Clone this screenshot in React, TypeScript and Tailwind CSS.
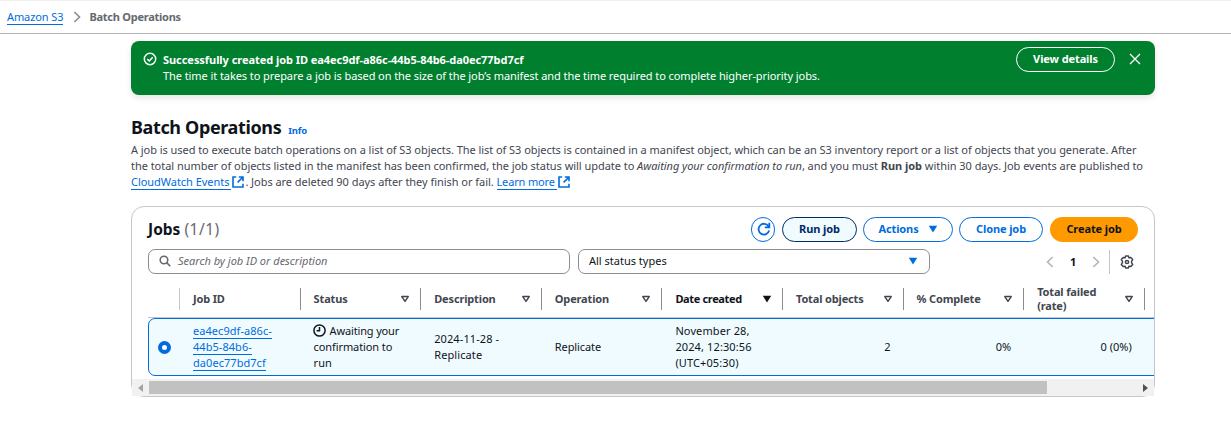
import type { ReactNode } from "react";

function Triangle({ filled = false, className = "" }: { filled?: boolean; className?: string }) {
  return (
    <svg width="10" height="8" viewBox="0 0 10 8" className={`shrink-0 ${className}`}>
      {filled ? (
        <path d="M0.8 0.8h8.4L5 7.4z" fill="currentColor" />
      ) : (
        <path d="M1.8 1.6h6.4L5 6.4z" fill="none" stroke="currentColor" strokeWidth="1.5" strokeLinejoin="round" />
      )}
    </svg>
  );
}

function Chevron({ left = false, className = "" }: { left?: boolean; className?: string }) {
  return (
    <svg width="8" height="12" viewBox="0 0 8 12" className={className} fill="none" stroke="currentColor" strokeWidth="1.6">
      <path d={left ? "M6.7 1L1.5 6l5.2 5" : "M1.3 1l5.2 5-5.2 5"} />
    </svg>
  );
}

function External() {
  return (
    <svg width="12" height="12" viewBox="0 0 12 12" className="mr-px inline-block align-[-2px] text-[#006ce0]" fill="none" stroke="currentColor" strokeWidth="1.6">
      <path d="M4.2 1H1v10h10V7.8M6.8 1H11v4.2M11 1L5.6 6.4" />
    </svg>
  );
}

function Button({ children, className }: { children: ReactNode; className: string }) {
  return (
    <button className={`flex h-[25px] shrink-0 items-center justify-center rounded-full pb-px text-[11px] font-bold tracking-[-0.1px] whitespace-nowrap ${className}`}>
      {children}
    </button>
  );
}

type Column = { title: ReactNode; sort?: "none" | "active" };

const columns: Column[] = [
  { title: "Job ID" },
  { title: "Status", sort: "none" },
  { title: "Description", sort: "none" },
  { title: "Operation", sort: "none" },
  { title: "Date created", sort: "active" },
  { title: "Total objects", sort: "none" },
  { title: "% Complete", sort: "none" },
  { title: <>Total failed<br />(rate)</>, sort: "none" },
];

const link = "mr-px inline-block h-4 border-b border-[#006ce0] pr-[2px] text-[#006ce0]";
const grid = "grid grid-cols-[32px_repeat(8,120.6px)]";

export default function App() {
  return (
    <div className="h-[435px] w-[1231px] overflow-hidden bg-white font-['Noto_Sans',sans-serif] text-[11px] leading-4 text-[#0f141a]">
      <nav className="flex h-[34px] items-center border-t border-b border-t-[#f0f0f2] border-b-[#b4b4bb] pl-[7px]">
        <a className="h-[15px] border-b border-[#006ce0] leading-[14px] tracking-[-0.1px] text-[#006ce0]">Amazon S3</a>
        <Chevron className="ml-[10px] text-[#8c8c94]" />
        <span className="ml-[8px] font-bold tracking-[-0.25px] text-[#656871]">Batch Operations</span>
      </nav>

      <div className="ml-[131px] w-[1024px]">
        <section className="mt-[7px] flex h-[54px] rounded-[8px] bg-[#00802f] pt-[6px] text-white shadow-[0_3px_6px_rgba(0,0,0,0.1)]">
          <svg width="14" height="14" viewBox="0 0 14 14" className="mt-[5px] ml-3 shrink-0" fill="none" stroke="currentColor" strokeWidth="1.5">
            <circle cx="7" cy="7" r="5.7" />
            <path d="M4.3 7.1l2 1.9 3.4-3.8" />
          </svg>
          <div className="mt-[5px] ml-[6px] flex-1 whitespace-nowrap">
            <div className="font-bold tracking-[-0.05px]">Successfully created job ID ea4ec9df-a86c-44b5-84b6-da0ec77bd7cf</div>
            <div className="tracking-[-0.075px]">The time it takes to prepare a job is based on the size of the job’s manifest and the time required to complete higher-priority jobs.</div>
          </div>
          <Button className="mr-[14px] h-[24px] w-[99px] border border-white">View details</Button>
          <svg width="12" height="12" viewBox="0 0 12 12" className="mt-[6px] mr-[14px]" stroke="currentColor" strokeWidth="1.3">
            <path d="M1 1l10 10M11 1L1 11" />
          </svg>
        </section>

        <header className="mt-[20px] flex h-[24px] items-baseline">
          <h1 className="text-[18px] leading-6 font-bold tracking-[-0.37px]">Batch Operations</h1>
          <a className="ml-[7px] text-[9.5px] font-bold tracking-[-0.2px] text-[#006ce0]">Info</a>
        </header>
        <div className="mt-[3px] text-[11px] whitespace-nowrap text-[#424650]">
          <p className="h-4 tracking-[-0.05px]">A job is used to execute batch operations on a list of S3 objects. The list of S3 objects is contained in a manifest object, which can be an S3 inventory report or a list of objects that you generate. After</p>
          <p className="h-4 tracking-[-0.04px]">the total number of objects listed in the manifest has been confirmed, the job status will update to <i>Awaiting your confirmation to run</i>, and you must <b>Run job</b> within 30 days. Job events are published to</p>
          <p className="h-4 tracking-[-0.04px]"><a className={link}>CloudWatch Events</a><External />. Jobs are deleted 90 days after they finish or fail. <a className={`${link} tracking-[-0.15px]`}>Learn more</a><External /></p>
        </div>

        <section className="mt-[16px] h-[191px] rounded-[13px] border border-[#c6c6cd]">
          <div className="mt-[10px] flex h-[25px] items-center pr-4 pl-4">
            <h2 className="flex-1 pb-[2px] text-[15.5px] font-bold">Jobs <span className="font-normal tracking-[0.5px] text-[#656871]">(1/1)</span></h2>
            <Button className="w-[24px] border-[1.5px] border-[#006ce0] pl-px text-[#006ce0]">
              <svg width="14" height="14" viewBox="0 0 14 14" className="shrink-0" fill="none" stroke="currentColor" strokeWidth="1.8">
                <path d="M12.2 8.600A5.400 5.400 0 1 1 11.500 4.200M12.300 0.800v4.500H7.800" />
              </svg>
            </Button>
            <Button className="ml-[7px] w-[75px] border-[1.5px] border-[#002b66] bg-[#f0fbff] text-[#002b66]">Run job</Button>
            <Button className="ml-[6px] w-[90px] gap-[9px] border-[1.5px] border-[#006ce0] text-[#006ce0]">Actions<Triangle filled /></Button>
            <Button className="ml-[6px] w-[84px] border-[1.5px] border-[#006ce0] text-[#006ce0]">Clone job</Button>
            <Button className="ml-[7px] w-[88px] bg-[#ff9900] pb-[2px] text-[#0f141a]">Create job</Button>
          </div>

          <div className="mt-[7px] flex h-[25px] items-center pl-4">
            <div className="flex h-[25px] w-[422px] items-center rounded-[7px] border border-[#8c8c94] pb-px pl-[10px] text-[#656871]">
              <svg width="12" height="12" viewBox="0 0 13 13" fill="none" stroke="currentColor" strokeWidth="1.7">
                <circle cx="5.4" cy="5.4" r="4.1" />
                <path d="M8.3 8.3l3.9 3.9" />
              </svg>
              <i className="ml-[7px]">Search by job ID or description</i>
            </div>
            <div className="ml-2 flex h-[25px] w-[352px] items-center justify-between rounded-[7px] border border-[#8c8c94] pr-[11px] pb-px pl-[10px]">
              All status types
              <Triangle filled className="text-[#006ce0]" />
            </div>
            <Chevron left className="ml-[116px] text-[#b4b4bb]" />
            <b className="ml-4">1</b>
            <Chevron className="ml-4 text-[#b4b4bb]" />
            <div className="ml-[9px] h-6 w-px bg-[#c6c6cd]" />
            <svg width="14" height="14" viewBox="0 0 14 14" className="ml-[10px] text-[#424650]" fill="none" stroke="currentColor" strokeWidth="1.5" strokeLinejoin="round">
              <path d="M5.6 1.1h2.8l.5 1.7 1.9-.4 1.9 2.2-1.1 1.5v1.8l1.1 1.5-1.9 2.2-1.9-.4-.5 1.7H5.6l-.5-1.7-1.9.4-1.9-2.2 1.1-1.5V6.1l-1.1-1.5 1.9-2.2 1.9.4z" />
              <circle cx="7" cy="7" r="1.6" />
            </svg>
          </div>

          <div className="w-[1022px] overflow-hidden pl-4">
            <div className={`${grid} h-[44px] w-[1006px] border-b border-[#c6c6cd] pt-[14px] font-bold tracking-[-0.15px] text-[#424650]`}>
              <div className="h-[22px] border-r border-[#c6c6cd]" />
              {columns.map((column, i) => (
                <div
                  key={i}
                  className={`flex h-[22px] items-center justify-between border-r border-[#8c8c94] pr-[10px] pl-[13px] leading-[14px] whitespace-nowrap ${column.sort === "active" ? "tracking-[-0.35px] text-[#0f141a]" : ""}`}
                >
                  <span>{column.title}</span>
                  {column.sort && <Triangle filled={column.sort === "active"} />}
                </div>
              ))}
            </div>
            <div className={`${grid} h-[58px] w-[1020px] items-center rounded-[7px] border-[1.5px] border-[#006ce0] bg-[#f0fbff] whitespace-nowrap`}>
              <div className="ml-[9px] h-[13px] w-[13px] rounded-full border-4 border-[#006ce0] bg-white" />
              <div className="pl-3 leading-4 text-[#006ce0]">
                {["ea4ec9df-a86c-", "44b5-84b6-", "da0ec77bd7cf"].map((part) => (
                  <div key={part} className="h-4"><span className="inline-block h-4 border-b border-[#006ce0] tracking-[0.05px]">{part}</span></div>
                ))}
              </div>
              <div className="pl-3">
                <svg width="13" height="13" viewBox="0 0 13 13" className="mr-1 -ml-px inline-block align-[-2px]" fill="none" stroke="currentColor" strokeWidth="1.5">
                  <circle cx="6.5" cy="6.5" r="5.6" />
                  <path d="M6.5 3v3.8H3.6" />
                </svg>
                <span className="tracking-[-0.15px]">Awaiting your</span><br /><span className="tracking-[-0.1px]">confirmation to</span><br />run
              </div>
              <div className="pl-3 tracking-[0.1px]">2024-11-28 -<br />Replicate</div>
              <div className="pl-3 tracking-[-0.1px]">Replicate</div>
              <div className="pl-3 tracking-[0.12px]">November 28,<br />2024, 12:30:56<br />(UTC+05:30)</div>
              <div className="pr-[14px] text-right">2</div>
              <div className="pr-[14px] text-right">0%</div>
              <div className="pr-[14px] text-right">0 (0%)</div>
            </div>
          </div>

          <div className="mt-[3px] flex h-[17px] items-center justify-between bg-[#f1f1f1] px-[6px]">
            <svg width="5" height="8" viewBox="0 0 5 8"><path d="M5 0v8L0 4z" fill="#a3a3a3" /></svg>
            <div className="mr-auto ml-[6px] h-[13px] w-[898px] bg-[#c1c1c1]" />
            <svg width="5" height="8" viewBox="0 0 5 8"><path d="M0 0v8l5-4z" fill="#505050" /></svg>
          </div>
        </section>
      </div>
    </div>
  );
}
